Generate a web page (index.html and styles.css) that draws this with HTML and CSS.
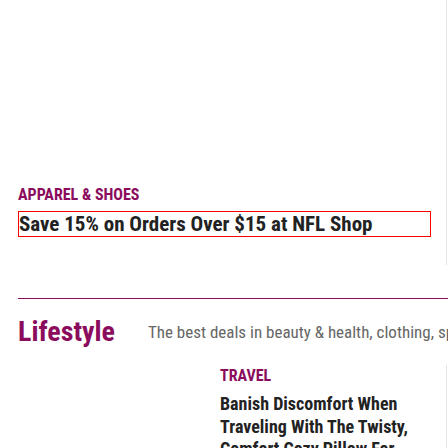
FILE: index.html
```html
<!DOCTYPE html>
<html>
<head>
<meta charset="utf-8">
<link rel="stylesheet" href="styles.css">
</head>
<body>
<div class="page">
  <div class="feature">
    <div class="tag">Apparel &amp; Shoes</div>
    <a class="feature-title" href="#">Save 15% on Orders Over $15 at NFL Shop</a>
  </div>
  <div class="section-head">
    <h2 class="section-name">Lifestyle</h2>
    <span class="divider"></span>
    <p class="section-desc">The best deals in beauty &amp; health, clothing, sports &amp; outdoors and more.</p>
  </div>
  <div class="article">
    <div class="thumb"></div>
    <div class="article-body">
      <div class="tag">Travel</div>
      <a class="article-title" href="#">Banish Discomfort When Traveling With The Twisty, Comfort Cozy Pillow For Less</a>
    </div>
  </div>
</div>
</body>
</html>
```
FILE: styles.css
```css
html, body {
  margin: 0;
  background: #fff;
  overflow: hidden;
}
body {
  font-family: "Roboto Condensed", Roboto, "Liberation Sans", sans-serif;
}
.page {
  padding-left: 18px;
  width: 448px;
  box-sizing: border-box;
}
.feature {
  width: 429px;
  height: 265px;
  box-sizing: border-box;
  border-right: 1px solid #e4e4e4;
  padding-top: 185px;
}
.tag {
  font-size: 16px;
  line-height: 20px;
  font-weight: 700;
  color: #8b0c5c;
  text-transform: uppercase;
}
.feature-title {
  display: block;
  margin-top: 6px;
  width: 413px;
  box-sizing: border-box;
  border: 1px solid #ff0000;
  font-size: 21px;
  line-height: 24px;
  font-weight: 700;
  color: #222;
  text-decoration: none;
  white-space: nowrap;
}
.section-head {
  margin-top: 33px;
  width: 460px;
  border-top: 1px solid #8b0c5c;
  padding-top: 16px;
  display: flex;
  align-items: center;
  white-space: nowrap;
}
.section-name {
  margin: 0;
  font-size: 28px;
  line-height: 34px;
  font-weight: 700;
  color: #8b0c5c;
}
.divider {
  width: 1px;
  height: 23px;
  background: #d0d0d0;
  margin: 0 17px 0 16px;
}
.section-desc {
  margin: 0;
  font-size: 17px;
  line-height: 20px;
  color: #666;
}
.article {
  margin-top: 16px;
  width: 429px;
  height: 120px;
  box-sizing: border-box;
  border-right: 1px solid #e4e4e4;
  display: flex;
}
.thumb {
  width: 202px;
  flex: none;
}
.article-body {
  width: 200px;
  padding-top: 1px;
}
.article-title {
  display: block;
  margin-top: 7px;
  font-size: 18px;
  line-height: 22.5px;
  font-weight: 700;
  color: #222;
  text-decoration: none;
}
```
